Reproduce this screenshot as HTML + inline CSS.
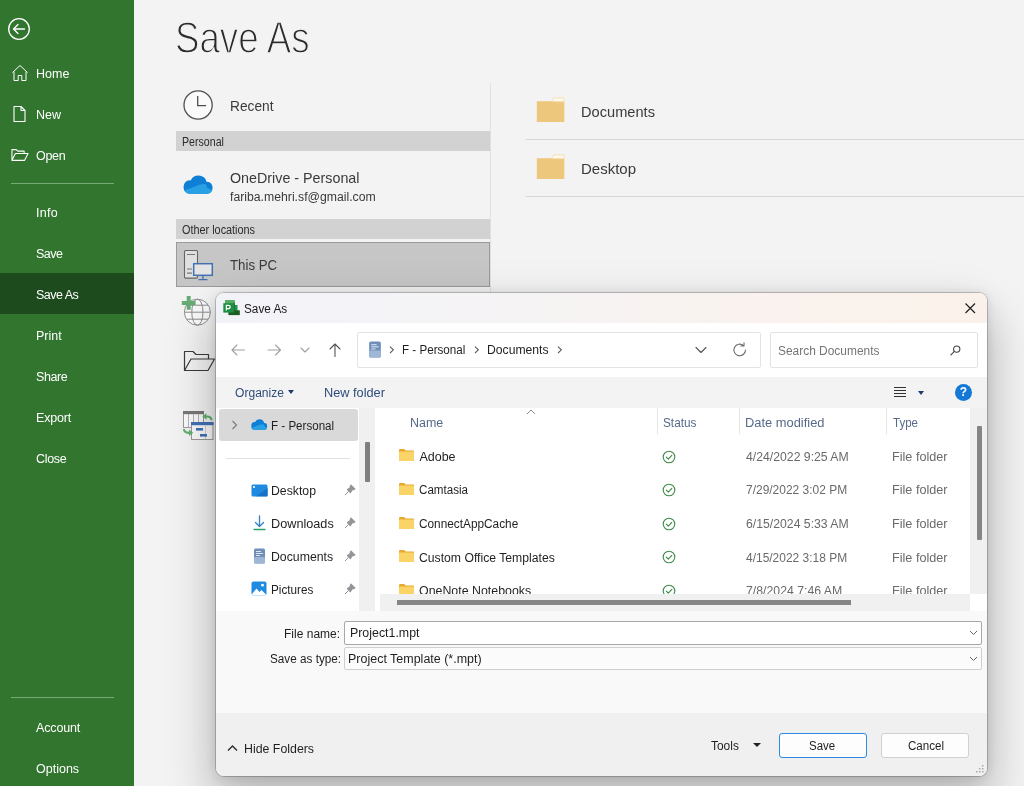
<!DOCTYPE html>
<html><head><meta charset="utf-8">
<style>
*{box-sizing:border-box;margin:0;padding:0}
html,body{width:1024px;height:786px;overflow:hidden;background:#f3f3f3;font-family:"Liberation Sans",sans-serif;color:#262626}
.abs{position:absolute}
#side{position:absolute;left:0;top:0;width:134px;height:786px;background:#31752f}
#side .it{position:absolute;left:0;width:134px;height:41px;line-height:45px;padding-left:36px;color:#fff;font-size:12.5px}
#side .sel{background:#1d4b1e}
#side .sep{position:absolute;left:11px;width:103px;height:1px;background:#76aa74}
#title{position:absolute;left:175px;top:11px;font-size:45px;line-height:54px;color:#2b2b2b;transform-origin:0 0;transform:scaleX(.815);-webkit-text-stroke:1.4px #f3f3f3;white-space:nowrap}
.hdr span{display:inline-block;transform-origin:0 50%}
.hdr{position:absolute;left:176px;width:314px;height:20px;background:#d2d2d2;font-size:12px;line-height:23px;padding-left:6px;color:#2b2b2b}
.loc{transform-origin:0 50%;position:absolute;left:230px;font-size:15px;color:#3a3a3a;white-space:nowrap}
.t{position:absolute;white-space:nowrap}
#dlg{position:absolute;left:216px;top:293px;width:771px;height:483px;border-radius:8px;background:#f9f9f9;box-shadow:0 0 0 1px rgba(0,0,0,.2),0 28px 46px 6px rgba(0,0,0,.21),0 1px 12px rgba(0,0,0,.12),0 0 44px rgba(0,0,0,.06);overflow:hidden;font-size:12px;color:#1a1a1a}
#dlg .t{font-size:12px;line-height:14px;transform-origin:0 0}
#dlg .g{color:#6d6d6d}
#dlg .h{color:#4c607a}
#dlg .b{color:#1e3a6e}
#dlg .c{color:#555;font-size:14px}
</style></head><body>
<div id="root" style="position:absolute;left:0;top:0;width:1024px;height:786px;will-change:transform;overflow:hidden">
<div id="side">
 <div class="it" style="top:52px">Home</div>
 <div class="it" style="top:93px">New</div>
 <div class="it" style="top:134px;letter-spacing:-.3px">Open</div>
 <div class="sep" style="top:183px"></div>
 <div class="it" style="top:191px;letter-spacing:0.3px">Info</div>
 <div class="it" style="top:232px;letter-spacing:-0.5px">Save</div>
 <div class="it sel" style="top:273px;letter-spacing:-0.5px">Save As</div>
 <div class="it" style="top:314px">Print</div>
 <div class="it" style="top:355px;letter-spacing:-0.4px">Share</div>
 <div class="it" style="top:396px;letter-spacing:-0.2px">Export</div>
 <div class="it" style="top:437px;letter-spacing:-0.3px">Close</div>
 <div class="sep" style="top:697px"></div>
 <div class="it" style="top:706px;letter-spacing:-0.15px">Account</div>
 <div class="it" style="top:747px">Options</div>
</div>

<!-- sidebar icons -->
<svg class="abs" style="left:7px;top:17px" width="24" height="24" viewBox="0 0 24 24" fill="none" stroke="#fff" stroke-width="1.3" stroke-linecap="round" stroke-linejoin="round"><circle cx="12" cy="12" r="10.3"/><path d="M17.5 12H7M11 7.5L6.5 12l4.500 4.500"/></svg>
<svg class="abs" style="left:10.700px;top:64px" width="18" height="18" viewBox="0 0 18 18" fill="none" stroke="#fff" stroke-width="1" stroke-linejoin="round"><path d="M1.500 8.500L9 1.500l7.500 7M3 7.500V16.500h4.200v-5h3.600v5H15V7.500"/></svg>
<svg class="abs" style="left:12px;top:104px" width="16" height="20" viewBox="0 0 16 20" fill="none" stroke="#fff" stroke-width="1.1" stroke-linejoin="round"><path d="M2 2.500h7l4 4V17.500H2zM9 2.500v4h4"/></svg>
<svg class="abs" style="left:9.500px;top:147px" width="19.500" height="16" viewBox="0 0 20 16" fill="none" stroke="#fff" stroke-width="1.1" stroke-linejoin="round"><path d="M2 13.500V2.500h4.500l1.500 1.500h6.500v2.500M2 13.500l3.500-7h13l-3.500 7z"/></svg>
<div id="title">Save As</div>
<!-- left list -->
<div class="abs" style="left:490px;top:83px;width:1px;height:210px;background:#e0e0e0"></div>
<div class="loc" style="top:97px;transform:scaleX(.915)">Recent</div>
<div class="hdr" style="top:131px"><span style="transform:scaleX(.885)">Personal</span></div>
<div class="loc" style="top:169px;transform:scaleX(.953)">OneDrive - Personal</div>
<div class="loc" style="top:190px;font-size:12.5px;transform:scaleX(.979)">fariba.mehri.sf@gmail.com</div>
<div class="hdr" style="top:219px"><span style="transform:scaleX(.905)">Other locations</span></div>
<div class="abs" style="left:176px;top:242px;width:313.500px;height:45px;background:#c6c6c6;border:1px solid #9a9a9a"></div>
<div class="loc" style="top:256px;transform:scaleX(.885)">This PC</div>
<!-- right list -->
<div class="loc" style="left:581px;top:102.500px;transform:scaleX(.975)">Documents</div>
<div class="abs" style="left:526px;top:139px;width:498px;height:1px;background:#d6d6d6"></div>
<div class="loc" style="left:581px;top:159.500px">Desktop</div>
<div class="abs" style="left:526px;top:196px;width:498px;height:1px;background:#d6d6d6"></div>


<!-- location icons -->
<svg class="abs" style="left:182px;top:88.700px" width="32" height="32" viewBox="0 0 32 32" fill="none" stroke="#505050" stroke-width="1.300"><circle cx="16.100" cy="16" r="14.100" fill="#fafafa"/><path d="M15.700 7v9.600h8.400"/></svg>
<svg class="abs" style="left:183px;top:174.500px" width="30" height="19.300" viewBox="0 0 30 20" preserveAspectRatio="none"><defs><clipPath id="c1"><ellipse cx="15.500" cy="8.500" rx="8.300" ry="8"/><ellipse cx="6.500" cy="12.500" rx="6" ry="7"/><ellipse cx="24.500" cy="13.300" rx="5.100" ry="6.200"/><rect x="6.500" y="10" width="18" height="9.500"/></clipPath></defs><g clip-path="url(#c1)"><rect width="30" height="20" fill="#0f7fd6"/><path d="M0 16.500L1.900 15.800 10.100 12.600 17 9.850 22.500 9.400 24.400 13.500 30 16V20H0z" fill="#28a0e4"/></g></svg>
<svg class="abs" style="left:182px;top:248px" width="34" height="34" viewBox="0 0 34 34" fill="none"><rect x="2.500" y="2.500" width="13" height="27.600" rx="1" stroke="#666" stroke-width="1.100" fill="#e0e0e0"/><path d="M5 6.500h8M5 21h5M5 25.200h5" stroke="#777" stroke-width="1.200"/><rect x="11.700" y="15.700" width="18.600" height="11.600" fill="#e4e4e4" stroke="#4472b0" stroke-width="1.500"/><path d="M21 28v3.500M16.500 31.600h9" stroke="#4472b0" stroke-width="1.300"/></svg>
<!-- add a place globe -->
<svg class="abs" style="left:180px;top:294px" width="34" height="34" viewBox="0 0 34 34" fill="none" stroke="#8c8c8c" stroke-width="1"><circle cx="17.400" cy="18.200" r="13" fill="#fbfbfb"/><ellipse cx="17.400" cy="18.200" rx="5.600" ry="13"/><path d="M4.400 18.200h26M6.800 11.200h21.200M6.800 25.200h21.200"/><path d="M8.700 2v13.800M1.800 8.900h13.800" stroke="#66ad74" stroke-width="4"/></svg>
<!-- browse folder -->
<svg class="abs" style="left:182px;top:347px" width="34" height="28" viewBox="0 0 34 28" fill="none" stroke="#3b3b3b" stroke-width="1.200" stroke-linejoin="round"><path d="M2.500 23.500V4.500h8.500l3 3h12.500V12M2.500 23.500l6.500-11.500h23.500l-6.500 11.500z"/></svg>
<!-- project icon -->
<svg class="abs" style="left:182px;top:410px" width="32" height="31" viewBox="0 0 32 31" fill="none"><rect x="1.500" y="1.500" width="20" height="16" fill="#fbfbfb" stroke="#9a9a9a"/><rect x="1" y="1" width="21" height="3.200" fill="#777"/><path d="M6.500 4v13.500M11.500 4v13.500M16.500 4v13.500" stroke="#b5b5b5"/><rect x="9.500" y="12.500" width="21.500" height="17" fill="#fbfbfb" stroke="#9a9a9a"/><rect x="9" y="12" width="22.500" height="3.200" fill="#4472b8"/><path d="M23.500 15v14" stroke="#d0d0d0"/><rect x="14" y="18" width="7" height="2.600" fill="#4472b8"/><rect x="18" y="24" width="7" height="2.600" fill="#4472b8"/><path d="M20.300 6.500l4.200-3.300v2.200c3.800-.2 6 1.600 6.200 4.800h-2.200c-.2-1.900-1.500-2.800-4-2.700v2.300z" fill="#62b070"/><path d="M11.200 22.800l-4.200 3.300v-2.200c-3.800.2-6-1.600-6.200-4.800H3c.2 1.900 1.500 2.800 4 2.700v-2.300z" fill="#62b070"/></svg>
<!-- right folders -->
<svg class="abs" style="left:536px;top:97px" width="30" height="26" viewBox="0 0 30 26"><path d="M.8 4.200H28.300V25H.8z" fill="#edc77c"/><path d="M15.800 4.500l2-3.700h10.200v4z" fill="#fdf8ec" stroke="#f2d9a4" stroke-width=".7"/></svg>
<svg class="abs" style="left:536px;top:154px" width="30" height="26" viewBox="0 0 30 26"><path d="M.8 4.200H28.300V25H.8z" fill="#edc77c"/><path d="M15.800 4.500l2-3.700h10.200v4z" fill="#fdf8ec" stroke="#f2d9a4" stroke-width=".7"/></svg>
<div id="dlg">
 <!-- title bar -->
 <div class="abs" style="left:0;top:0;width:771px;height:30px;background:linear-gradient(90deg,#f2f3f9 0%,#f5f3f5 35%,#f9f2ee 70%,#faf1ea 100%)"></div>
 <svg class="abs" style="left:7px;top:7px" width="17" height="15.500" viewBox="0 0 17 15.500"><rect x="2" y="0" width="9.800" height="4" fill="#58ad65"/><rect x="10.500" y="2" width="1.400" height="9" fill="#3f9a52"/><rect x="11.500" y="5" width="3" height="6" fill="#21934a"/><rect x="5.400" y="10.300" width="11.400" height="4.800" fill="#1b5e20"/><rect x="10.300" y="3.200" width="1.500" height="9.400" fill="#176a34"/><rect x=".3" y="3.200" width="10.200" height="9.400" fill="#1e8e42"/><path d="M3.400 10.600V5.300h2.100a1.650 1.650 0 0 1 0 3.300H3.400" fill="none" stroke="#fff" stroke-width="1.300"/></svg>
 <svg class="abs" style="left:749px;top:10px" width="10.500" height="10.500" viewBox="0 0 10.500 10.500" stroke="#1a1a1a" stroke-width="1.100"><path d="M.5 .5l9.500 9.500M10 .5L.5 10"/></svg>
 <!-- nav row -->
 <div class="abs" style="left:0;top:30px;width:771px;height:54px;background:#fff"></div>
 <svg class="abs" style="left:14px;top:48.500px" width="140" height="16" viewBox="0 0 140 16" fill="none" stroke-width="1.100" stroke-linecap="round" stroke-linejoin="round"><path d="M14.500 8H2M7 3L2 8l5 5" stroke="#a0a0a0"/><path d="M38 8h12.500M45.500 3l5 5-5 5" stroke="#a0a0a0"/><path d="M71 6l4 4 4-4" stroke="#a0a0a0"/><path d="M105 14.500V2M100 7l5-5 5 5" stroke="#555"/></svg>
 <div class="abs" style="left:141px;top:39px;width:404px;height:36px;border:1px solid #e3e3e3;border-radius:2px;background:#fff"></div>
 <svg class="abs" style="left:151.500px;top:47.500px" width="14" height="17" viewBox="0 0 13 16"><rect x="1" y=".5" width="11" height="15" rx="1.500" fill="#6f8fb8"/><rect x="1" y="9" width="11" height="6.500" rx="1.200" fill="#9fb7d6"/><path d="M3 3.500h5M3 5.500h7M3 7.500h4" stroke="#e8eef7" stroke-width=".9"/></svg>
 <svg class="abs" style="left:173.2px;top:53px" width="6" height="8" viewBox="0 0 6 8" fill="none" stroke="#5a5a5a" stroke-width="1.05"><path d="M1 .6l3.400 3.200-3.400 3.200"/></svg>
 <svg class="abs" style="left:257.6px;top:53px" width="6" height="8" viewBox="0 0 6 8" fill="none" stroke="#5a5a5a" stroke-width="1.05"><path d="M1 .6l3.400 3.200-3.400 3.200"/></svg>
 <svg class="abs" style="left:341.2px;top:53px" width="6" height="8" viewBox="0 0 6 8" fill="none" stroke="#5a5a5a" stroke-width="1.05"><path d="M1 .6l3.400 3.200-3.400 3.200"/></svg>
 <svg class="abs" style="left:479px;top:53px" width="12" height="8" viewBox="0 0 12 8" fill="none" stroke="#555" stroke-width="1.100" stroke-linecap="round" stroke-linejoin="round"><path d="M1 1.500l5 5 5-5"/></svg>
 <svg class="abs" style="left:516px;top:49px" width="16" height="16" viewBox="0 0 16 16" fill="none" stroke="#6a6a6a" stroke-width="1.100" stroke-linecap="round" stroke-linejoin="round"><path d="M13.500 8a5.800 5.800 0 1 1-2-4.400M12 .8v3.200H8.800"/></svg>
 <div class="abs" style="left:554px;top:39px;width:208px;height:36px;border:1px solid #e3e3e3;border-radius:2px;background:#fff"></div>
 <svg class="abs" style="left:732.500px;top:51px" width="13" height="13" viewBox="0 0 14 14" fill="none" stroke="#444" stroke-width="1.200" stroke-linecap="round"><circle cx="8.300" cy="5.500" r="3.400"/><path d="M5.800 8L2 11.800"/></svg>
 <!-- toolbar -->
 <div class="abs" style="left:0;top:84px;width:771px;height:31px;background:#f3f3f3"></div>
 <div class="abs" style="left:72px;top:97px;border-left:3.500px solid transparent;border-right:3.500px solid transparent;border-top:4px solid #1e3a6e"></div>
 <svg class="abs" style="left:677px;top:93px" width="14" height="13" viewBox="0 0 14 13" stroke="#333" stroke-width="1"><path d="M1 1.500h12M1 4.500h12M1 7.500h12M1 10.500h12"/></svg>
 <div class="abs" style="left:702px;top:98px;border-left:3.500px solid transparent;border-right:3.500px solid transparent;border-top:4px solid #1e3a6e"></div>
 <div class="abs" style="left:739px;top:91px;width:17px;height:17px;border-radius:9px;background:#1479d6;color:#fff;font-size:12px;font-weight:bold;line-height:17px;text-align:center">?</div>
 <!-- body -->
 <div class="abs" style="left:0;top:115px;width:771px;height:203px;background:#fff"></div>
 <!-- nav pane -->
 <div class="abs" style="left:3px;top:116px;width:139px;height:32px;background:#d9d9d9;border-radius:3px"></div>
 <svg class="abs" style="left:15px;top:127px" width="7" height="10" viewBox="0 0 7 10" fill="none" stroke="#7a7a7a" stroke-width="1.100"><path d="M1.500 1l4 4-4 4"/></svg>
 <svg class="abs" style="left:35.200px;top:126px" width="16.5" height="11" viewBox="0 0 30 20"><defs><clipPath id="c2"><ellipse cx="15.500" cy="8.500" rx="8.300" ry="8"/><ellipse cx="6.500" cy="12.500" rx="6" ry="7"/><ellipse cx="24.500" cy="13.300" rx="5.100" ry="6.200"/><rect x="6.500" y="10" width="18" height="9.500"/></clipPath></defs><g clip-path="url(#c2)"><rect width="30" height="20" fill="#0f7fd6"/><path d="M0 16.500L1.900 15.800 10.100 12.600 17 9.850 22.500 9.400 24.400 13.500 30 16V20H0z" fill="#28a0e4"/></g></svg>
 <div class="abs" style="left:10px;top:165px;width:124px;height:1px;background:#e0e0e0"></div>
 <svg class="abs" style="left:35px;top:191px" width="17" height="13" viewBox="0 0 17 13"><rect x=".5" y=".5" width="16" height="12" rx="1.500" fill="#1e8be0"/><path d="M17 4v7.500q0 1-1 1H5z" fill="#0c5fb5" opacity=".55"/><rect x="2" y="2" width="2" height="2" fill="#cfe8fb"/></svg>
 <svg class="abs" style="left:128px;top:191px" width="12" height="12" viewBox="0 0 12 12"><path d="M7 .8l4.200 4.200-1 .6-2 .3-1.800 3L3 5.600l3-1.800.3-2zM4.300 7.700L1 11" fill="#929498" stroke="#929498" stroke-width="1" stroke-linejoin="round"/></svg>
 <svg class="abs" style="left:36px;top:222px" width="15" height="16" viewBox="0 0 15 16" fill="none" stroke-linecap="round" stroke-linejoin="round"><path d="M7.500 1v10M3.500 7.500l4 4 4-4" stroke="#2f7fc8" stroke-width="1.300"/><path d="M2 14.500h11" stroke="#2ba36a" stroke-width="1.400"/></svg>
 <svg class="abs" style="left:128px;top:224px" width="12" height="12" viewBox="0 0 12 12"><path d="M7 .8l4.200 4.200-1 .6-2 .3-1.800 3L3 5.600l3-1.800.3-2zM4.300 7.700L1 11" fill="#929498" stroke="#929498" stroke-width="1" stroke-linejoin="round"/></svg>
 <svg class="abs" style="left:37px;top:255px" width="13" height="16" viewBox="0 0 13 16"><rect x="1" y=".5" width="11" height="15" rx="1.500" fill="#6f8fb8"/><rect x="1" y="9" width="11" height="6.500" rx="1.200" fill="#9fb7d6"/><path d="M3 3.500h5M3 5.500h7M3 7.500h4" stroke="#e8eef7" stroke-width=".9"/></svg>
 <svg class="abs" style="left:128px;top:257px" width="12" height="12" viewBox="0 0 12 12"><path d="M7 .8l4.200 4.200-1 .6-2 .3-1.800 3L3 5.600l3-1.800.3-2zM4.300 7.700L1 11" fill="#929498" stroke="#929498" stroke-width="1" stroke-linejoin="round"/></svg>
 <svg class="abs" style="left:35px;top:288px" width="16" height="15" viewBox="0 0 16 15"><rect x=".5" y=".5" width="15" height="14" rx="2" fill="#1e8be0"/><path d="M1 13l4.500-5.500 3 3.500 2-2L15 13.500q-.3 1-1.500 1H2.500Q1.200 14.500 1 13z" fill="#fff"/><circle cx="11.500" cy="4.200" r="1.400" fill="#fff"/></svg>
 <svg class="abs" style="left:128px;top:290px" width="12" height="12" viewBox="0 0 12 12"><path d="M7 .8l4.200 4.200-1 .6-2 .3-1.800 3L3 5.600l3-1.800.3-2zM4.300 7.700L1 11" fill="#929498" stroke="#929498" stroke-width="1" stroke-linejoin="round"/></svg>
 <!-- nav scroll -->
 <div class="abs" style="left:143.300px;top:115px;width:16px;height:203px;background:#f0f0f0"></div>
 <div class="abs" style="left:149px;top:149px;width:5px;height:40px;background:#7f7f7f;border-radius:1px"></div>
 <!-- list header -->
 <svg class="abs" style="left:310px;top:116px" width="10" height="6" viewBox="0 0 10 6" fill="none" stroke="#8a8a8a" stroke-width="1"><path d="M1 5l4-4 4 4"/></svg>
 <div class="abs" style="left:441px;top:115px;width:1px;height:26px;background:#e5e5e5"></div>
 <div class="abs" style="left:523px;top:115px;width:1px;height:26px;background:#e5e5e5"></div>
 <div class="abs" style="left:670px;top:115px;width:1px;height:26px;background:#e5e5e5"></div>
 <svg class="abs" style="left:182.400px;top:155.2px" width="17" height="14" viewBox="0 0 17 14"><path d="M1 2.200Q1 1 2.200 1h4l1.500 1.500H15q1 0 1 1V12q0 1-1 1H2q-1 0-1-1z" fill="#e8a92f"/><path d="M1 4.500Q1 3.500 2 3.500h13q1 0 1 1V12q0 1-1 1H2q-1 0-1-1z" fill="#fbd467"/></svg><svg class="abs" style="left:446.100px;top:156.8px" width="14" height="14" viewBox="0 0 14 14" fill="none" stroke="#3c8a47" stroke-width="1.100"><circle cx="7" cy="7" r="5.800"/><path d="M4.300 7.200l2 2 3.500-3.800" stroke-linecap="round" stroke-linejoin="round"/></svg><svg class="abs" style="left:182.400px;top:189px" width="17" height="14" viewBox="0 0 17 14"><path d="M1 2.200Q1 1 2.200 1h4l1.500 1.500H15q1 0 1 1V12q0 1-1 1H2q-1 0-1-1z" fill="#e8a92f"/><path d="M1 4.500Q1 3.500 2 3.500h13q1 0 1 1V12q0 1-1 1H2q-1 0-1-1z" fill="#fbd467"/></svg><svg class="abs" style="left:446.100px;top:190px" width="14" height="14" viewBox="0 0 14 14" fill="none" stroke="#3c8a47" stroke-width="1.100"><circle cx="7" cy="7" r="5.800"/><path d="M4.300 7.200l2 2 3.500-3.800" stroke-linecap="round" stroke-linejoin="round"/></svg><svg class="abs" style="left:182.400px;top:222.6px" width="17" height="14" viewBox="0 0 17 14"><path d="M1 2.200Q1 1 2.200 1h4l1.500 1.500H15q1 0 1 1V12q0 1-1 1H2q-1 0-1-1z" fill="#e8a92f"/><path d="M1 4.500Q1 3.500 2 3.500h13q1 0 1 1V12q0 1-1 1H2q-1 0-1-1z" fill="#fbd467"/></svg><svg class="abs" style="left:446.100px;top:223.6px" width="14" height="14" viewBox="0 0 14 14" fill="none" stroke="#3c8a47" stroke-width="1.100"><circle cx="7" cy="7" r="5.800"/><path d="M4.300 7.200l2 2 3.500-3.800" stroke-linecap="round" stroke-linejoin="round"/></svg><svg class="abs" style="left:182.400px;top:256.3px" width="17" height="14" viewBox="0 0 17 14"><path d="M1 2.200Q1 1 2.200 1h4l1.500 1.500H15q1 0 1 1V12q0 1-1 1H2q-1 0-1-1z" fill="#e8a92f"/><path d="M1 4.500Q1 3.500 2 3.500h13q1 0 1 1V12q0 1-1 1H2q-1 0-1-1z" fill="#fbd467"/></svg><svg class="abs" style="left:446.100px;top:257.1px" width="14" height="14" viewBox="0 0 14 14" fill="none" stroke="#3c8a47" stroke-width="1.100"><circle cx="7" cy="7" r="5.800"/><path d="M4.300 7.200l2 2 3.500-3.800" stroke-linecap="round" stroke-linejoin="round"/></svg><svg class="abs" style="left:182.400px;top:290px" width="17" height="14" viewBox="0 0 17 14"><path d="M1 2.200Q1 1 2.200 1h4l1.500 1.500H15q1 0 1 1V12q0 1-1 1H2q-1 0-1-1z" fill="#e8a92f"/><path d="M1 4.500Q1 3.500 2 3.500h13q1 0 1 1V12q0 1-1 1H2q-1 0-1-1z" fill="#fbd467"/></svg><svg class="abs" style="left:446.100px;top:290.8px" width="14" height="14" viewBox="0 0 14 14" fill="none" stroke="#3c8a47" stroke-width="1.100"><circle cx="7" cy="7" r="5.800"/><path d="M4.300 7.200l2 2 3.500-3.800" stroke-linecap="round" stroke-linejoin="round"/></svg>
 <!-- hscroll -->
 <div class="abs" style="left:164px;top:301px;width:590px;height:17px;background:#f0f0f0"></div>
 <div class="abs" style="left:181px;top:307px;width:453.500px;height:5px;background:#858585"></div>
 <!-- vscroll -->
 <div class="abs" style="left:754px;top:115px;width:17px;height:186px;background:#f0f0f0"></div>
 <div class="abs" style="left:760.500px;top:133px;width:5px;height:114px;background:#858585;border-radius:1px"></div>
 <div class="abs" style="left:754px;top:301px;width:17px;height:17px;background:#fff"></div>
 <!-- inputs -->
 <div class="abs" style="left:0;top:318px;width:771px;height:102px;background:#f9f9f9"></div>
 <div class="abs" style="left:128px;top:328px;width:638px;height:24px;background:#fff;border:1px solid #a8a8a8;border-radius:2px"></div>
 <div class="abs" style="left:128px;top:354px;width:638px;height:23px;background:#fbfbfb;border:1px solid #cfcfcf;border-radius:2px"></div>
 <svg class="abs" style="left:753px;top:337px" width="9" height="6" viewBox="0 0 9 6" fill="none" stroke="#666" stroke-width="1"><path d="M1 1l3.500 3.500L8 1"/></svg>
 <svg class="abs" style="left:753px;top:363px" width="9" height="6" viewBox="0 0 9 6" fill="none" stroke="#666" stroke-width="1"><path d="M1 1l3.500 3.500L8 1"/></svg>
 <!-- footer -->
 <div class="abs" style="left:0;top:420px;width:771px;height:63px;background:#f0f0f0"></div>
 <svg class="abs" style="left:11px;top:451px" width="11" height="8" viewBox="0 0 11 8" fill="none" stroke="#333" stroke-width="1.500"><path d="M1 6.500l4.500-4.500 4.500 4.500"/></svg>
 <div class="abs" style="left:537px;top:450px;border-left:4px solid transparent;border-right:4px solid transparent;border-top:4.500px solid #222"></div>
 <div class="abs" style="left:562.500px;top:440px;width:88.500px;height:25px;background:#fdfdfd;border:1px solid #2b8be0;border-radius:3px;text-align:center;">
</div>
 <div class="abs" style="left:665px;top:440px;width:88px;height:25px;background:#fdfdfd;border:1px solid #d0d0d0;border-radius:3px;text-align:center;">
</div>
 <svg class="abs" style="left:759px;top:471px" width="10" height="10" viewBox="0 0 10 10" fill="#a8a8a8"><rect x="7" y="1" width="1.500" height="1.500"/><rect x="4" y="4" width="1.500" height="1.500"/><rect x="7" y="4" width="1.500" height="1.500"/><rect x="1" y="7" width="1.500" height="1.500"/><rect x="4" y="7" width="1.500" height="1.500"/><rect x="7" y="7" width="1.500" height="1.500"/></svg>
<div class="abs" style="left:0;top:0;width:771px;height:301px;overflow:hidden">
<!--ROWICONS-->
<div class="t" style="left:203.40px;top:156.50px;color:#1f1f1f;font-size:12.5px;transform:scaleX(1.0000)">Adobe</div>
<div class="t" style="left:530.40px;top:156.50px;color:#6a6a6a;font-size:12.5px;transform:scaleX(0.9788)">4/24/2022 9:25 AM</div>
<div class="t" style="left:676.39px;top:156.50px;color:#6a6a6a;font-size:12.5px;transform:scaleX(1.0111)">File folder</div>
<div class="t" style="left:203.40px;top:190.20px;color:#1f1f1f;font-size:12.5px;transform:scaleX(0.9283)">Camtasia</div>
<div class="t" style="left:530.40px;top:190.20px;color:#6a6a6a;font-size:12.5px;transform:scaleX(0.9571)">7/29/2022 3:02 PM</div>
<div class="t" style="left:676.39px;top:190.20px;color:#6a6a6a;font-size:12.5px;transform:scaleX(1.0111)">File folder</div>
<div class="t" style="left:203.40px;top:223.90px;color:#1f1f1f;font-size:12.5px;transform:scaleX(0.9457)">ConnectAppCache</div>
<div class="t" style="left:530.40px;top:223.90px;color:#6a6a6a;font-size:12.5px;transform:scaleX(0.9788)">6/15/2024 5:33 AM</div>
<div class="t" style="left:676.39px;top:223.90px;color:#6a6a6a;font-size:12.5px;transform:scaleX(1.0111)">File folder</div>
<div class="t" style="left:203.40px;top:257.50px;color:#1f1f1f;font-size:12.5px;transform:scaleX(0.9755)">Custom Office Templates</div>
<div class="t" style="left:530.40px;top:257.50px;color:#6a6a6a;font-size:12.5px;transform:scaleX(0.9571)">4/15/2022 3:18 PM</div>
<div class="t" style="left:676.39px;top:257.50px;color:#6a6a6a;font-size:12.5px;transform:scaleX(1.0111)">File folder</div>
<div class="t" style="left:203.40px;top:290.60px;color:#1f1f1f;font-size:12.5px;transform:scaleX(0.9903)">OneNote Notebooks</div>
<div class="t" style="left:530.40px;top:290.60px;color:#6a6a6a;font-size:12.5px;transform:scaleX(0.9825)">7/8/2024 7:46 AM</div>
<div class="t" style="left:676.39px;top:290.60px;color:#6a6a6a;font-size:12.5px;transform:scaleX(1.0111)">File folder</div>
</div>
<div class="t" style="left:27.96px;top:8.70px;color:#1a1a1a;font-size:12.5px;transform:scaleX(0.9409)">Save As</div>
<div class="t" style="left:186.07px;top:49.80px;color:#1f1f1f;font-size:12.5px;transform:scaleX(0.9303)">F - Personal</div>
<div class="t" style="left:270.83px;top:49.80px;color:#1f1f1f;font-size:12.5px;transform:scaleX(0.9742)">Documents</div>
<div class="t" style="left:561.85px;top:50.50px;color:#757575;font-size:12.5px;transform:scaleX(0.9543)">Search Documents</div>
<div class="t" style="left:18.50px;top:92.70px;color:#2f4b7c;font-size:12.5px;transform:scaleX(0.9660)">Organize</div>
<div class="t" style="left:107.68px;top:92.70px;color:#2f4b7c;font-size:12.5px;transform:scaleX(1.0203)">New folder</div>
<div class="t" style="left:55.27px;top:126.20px;color:#1f1f1f;font-size:12.5px;transform:scaleX(0.9273)">F - Personal</div>
<div class="t" style="left:55.22px;top:191.20px;color:#1f1f1f;font-size:12.5px;transform:scaleX(0.9800)">Desktop</div>
<div class="t" style="left:55.18px;top:224.00px;color:#1f1f1f;font-size:12.5px;transform:scaleX(1.0150)">Downloads</div>
<div class="t" style="left:55.22px;top:256.80px;color:#1f1f1f;font-size:12.5px;transform:scaleX(0.9823)">Documents</div>
<div class="t" style="left:55.26px;top:289.60px;color:#1f1f1f;font-size:12.5px;transform:scaleX(0.9364)">Pictures</div>
<div class="t" style="left:193.60px;top:122.80px;color:#56698a;font-size:12.5px;transform:scaleX(0.9969)">Name</div>
<div class="t" style="left:447.46px;top:122.80px;color:#56698a;font-size:12.5px;transform:scaleX(0.9441)">Status</div>
<div class="t" style="left:529.37px;top:122.80px;color:#56698a;font-size:12.5px;transform:scaleX(1.0303)">Date modified</div>
<div class="t" style="left:677.40px;top:122.80px;color:#56698a;font-size:12.5px;transform:scaleX(0.9222)">Type</div>
<div class="t" style="left:68.24px;top:333.80px;color:#1f1f1f;font-size:12.5px;transform:scaleX(0.9614)">File name:</div>
<div class="t" style="left:133.81px;top:333.00px;color:#1f1f1f;font-size:12.5px;transform:scaleX(0.9899)">Project1.mpt</div>
<div class="t" style="left:53.56px;top:359.40px;color:#1f1f1f;font-size:12.5px;transform:scaleX(0.9392)">Save as type:</div>
<div class="t" style="left:131.60px;top:359.20px;color:#1f1f1f;font-size:12.5px;transform:scaleX(0.9985)">Project Template (*.mpt)</div>
<div class="t" style="left:27.51px;top:448.80px;color:#1f1f1f;font-size:12.5px;transform:scaleX(0.9884)">Hide Folders</div>
<div class="t" style="left:495.20px;top:445.80px;color:#1f1f1f;font-size:12.5px;transform:scaleX(0.9552)">Tools</div>
<div class="t" style="left:592.78px;top:445.80px;color:#1f1f1f;font-size:12.5px;transform:scaleX(0.9185)">Save</div>
<div class="t" style="left:691.60px;top:445.80px;color:#1f1f1f;font-size:12.5px;transform:scaleX(0.9263)">Cancel</div>
</div>
</div>
</body></html>
